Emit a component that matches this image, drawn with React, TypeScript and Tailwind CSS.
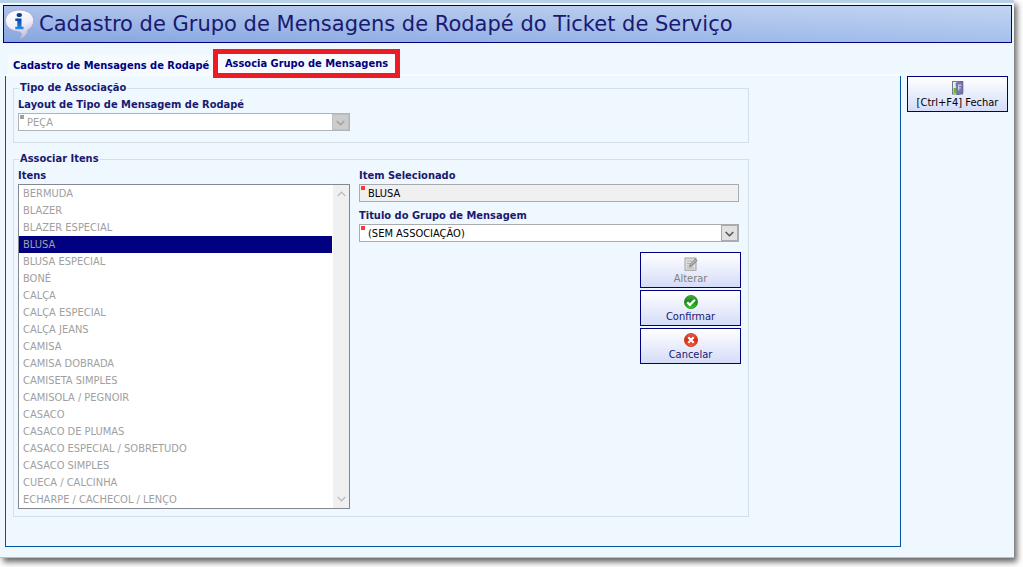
import type { ReactNode } from "react";

const items = [
  "BERMUDA",
  "BLAZER",
  "BLAZER ESPECIAL",
  "BLUSA",
  "BLUSA ESPECIAL",
  "BONÉ",
  "CALÇA",
  "CALÇA ESPECIAL",
  "CALÇA JEANS",
  "CAMISA",
  "CAMISA DOBRADA",
  "CAMISETA SIMPLES",
  "CAMISOLA / PEGNOIR",
  "CASACO",
  "CASACO DE PLUMAS",
  "CASACO ESPECIAL / SOBRETUDO",
  "CASACO SIMPLES",
  "CUECA / CALCINHA",
  "ECHARPE / CACHECOL / LENÇO",
];

function InfoIcon() {
  return (
    <svg width="32" height="34" viewBox="0 0 32 34" aria-hidden="true">
      <defs>
        <linearGradient id="bubble" x1="0" y1="0" x2="0.4" y2="1">
          <stop offset="0" stopColor="#ffffff" />
          <stop offset="0.6" stopColor="#f1f0fb" />
          <stop offset="1" stopColor="#c3c2e2" />
        </linearGradient>
        <linearGradient id="info" x1="0" y1="0" x2="0" y2="1">
          <stop offset="0" stopColor="#0a3f9c" />
          <stop offset="1" stopColor="#1e90f0" />
        </linearGradient>
      </defs>
      <path
        d="M15.500 3C7.600 3 1.500 7.300 1.500 13.500c0 6 5 10 12.300 10.900 2.500.3 3.700 1.200 3.600 3.200-.1 1.800-1 3.200-2.300 4.400 5.200-1.200 8.200-4.300 8.700-9 3.600-2 5.900-5.300 5.900-9.300C29.700 7.300 23.500 3 15.500 3z"
        fill="url(#bubble)"
        stroke="#a9a8cc"
        strokeWidth="0.9"
      />
      <ellipse cx="15.300" cy="8" rx="2.700" ry="2.100" fill="#0b3d97" />
      <path d="M11.300 11.500h6.200v8.300h2V22.200h-8.200v-2.400h2v-5.900h-2z" fill="url(#info)" />
    </svg>
  );
}

function DoorIcon() {
  return (
    <svg width="12" height="14" viewBox="0 0 12 14" aria-hidden="true">
      <rect x="0.500" y="0.500" width="10" height="12.500" fill="#e9e9f2" stroke="#77778c" />
      <rect x="1.500" y="7" width="3" height="5" fill="#5fc51e" />
      <path d="M4 2l7-1.500v11.500L5 14z" fill="#7776ad" stroke="#56558a" strokeWidth="0.600" />
      <path d="M6 3.500h3.500v1.200H7.200v1.600h1.600v1.200H7.200v2H6z" fill="#c7c8e6" />
    </svg>
  );
}

function EditIcon() {
  return (
    <svg width="14" height="14" viewBox="0 0 14 14" aria-hidden="true">
      <rect x="1" y="1" width="11" height="12.300" fill="#dedede" stroke="#a2a2a2" />
      <path d="M3 4h5M3 6.500h4M3 9h2M3 11h7" stroke="#b2b2b2" />
      <path d="M5.500 9.800l.7-2.600 5-5.400 1.900 1.800-5.100 5.400z" fill="#999" stroke="#777" strokeWidth="0.600" />
      <path d="M7 7.800l4.500-4.800" stroke="#d8d8d8" strokeWidth="0.800" />
    </svg>
  );
}

function ConfirmIcon() {
  return (
    <svg width="14" height="14" viewBox="0 0 14 14" aria-hidden="true">
      <defs>
        <linearGradient id="green" x1="0" y1="0" x2="0" y2="1">
          <stop offset="0" stopColor="#4ba64b" />
          <stop offset="0.450" stopColor="#168a16" />
          <stop offset="1" stopColor="#35cf1f" />
        </linearGradient>
      </defs>
      <circle cx="7" cy="7" r="6.600" fill="url(#green)" stroke="#1f7f22" strokeWidth="0.700" />
      <path d="M3.200 7.200l2.700 2.700 5-5.200" fill="none" stroke="#fff" strokeWidth="2.300" />
    </svg>
  );
}

function CancelIcon() {
  return (
    <svg width="14" height="14" viewBox="0 0 14 14" aria-hidden="true">
      <defs>
        <linearGradient id="red" x1="0" y1="0" x2="0" y2="1">
          <stop offset="0" stopColor="#e8604e" />
          <stop offset="0.450" stopColor="#d42a12" />
          <stop offset="1" stopColor="#ff5a2c" />
        </linearGradient>
      </defs>
      <circle cx="7" cy="7" r="6.600" fill="url(#red)" stroke="#b92c1c" strokeWidth="0.700" />
      <path d="M4.300 4.300l5.400 5.400M9.700 4.300l-5.400 5.400" stroke="#fff" strokeWidth="2.300" />
    </svg>
  );
}

function Chevron({ up = false }: { up?: boolean }) {
  return (
    <svg width="9" height="6" viewBox="0 0 9 6" aria-hidden="true">
      <path d={up ? "M.7 5l3.800-3.800L8.300 5" : "M.7 1l3.800 3.800L8.300 1"} fill="none" stroke="currentColor" strokeWidth="1.400" />
    </svg>
  );
}

function ActionButton({ icon, color, disabled, children }: { icon: ReactNode; color: string; disabled?: boolean; children: ReactNode }) {
  return (
    <button
      type="button"
      disabled={disabled}
      className={`flex h-9 w-[101px] flex-col items-center justify-end whitespace-nowrap border border-[#000080] bg-linear-to-b from-white to-[#d5dcf8] ${color}`}
    >
      {icon}
      <span className="leading-4">{children}</span>
    </button>
  );
}

function Group({ title, children }: { title: string; children: ReactNode }) {
  return (
    <fieldset className="w-full max-w-[736px] border border-[#d5dfe8] px-1">
      <legend className="ml-px px-px font-bold leading-[14px] text-[#191970]">{title}</legend>
      {children}
    </fieldset>
  );
}

const labelClass = "block pt-0.5 font-bold leading-[14px] text-[#191970]";

function Combo({ id, value, disabled }: { id: string; value: string; disabled?: boolean }) {
  return (
    <div className={`relative flex h-[18px] border bg-white ${disabled ? "border-[#b0b4b8]" : "border-[#a9abb0]"}`}>
      <select
        id={id}
        disabled={disabled}
        className={`w-full appearance-none bg-transparent pl-2 pt-px leading-[15px] opacity-100 ${disabled ? "text-[#a0a0a0]" : "text-black"}`}
      >
        <option>{value}</option>
      </select>
      <span className={`absolute left-px top-px size-1 ${disabled ? "bg-[#a0a0a0]" : "bg-[#ff3838]"}`} />
      <span
        className={`pointer-events-none absolute inset-y-0 right-0 flex w-[17px] items-center justify-center border pt-0.5 ${
          disabled ? "border-[#bfbfbf] bg-[#cccccc] text-[#a0a0a0]" : "border-[#a9abb0] bg-[#e1e1e1] text-[#505050]"
        }`}
      >
        <Chevron />
      </span>
    </div>
  );
}

export default function App() {
  return (
    <div className="bg-white pb-[9px] pr-[9px] font-['DejaVu_Sans_Condensed','DejaVu_Sans',sans-serif] text-[11px]">
      <main className="border-b border-t-3 border-b-[#a9c4dc] border-t-[#b8cfe8] bg-[#eff7ff] pt-0.5 shadow-[3px_4px_6px_0px_#666666]">
        <header className="ml-[3px] mr-0.5 flex h-[38px] items-center gap-[3px] border border-[#000080] bg-[linear-gradient(to_bottom,rgba(255,255,255,0.32),rgba(255,255,255,0)),linear-gradient(to_right,#86a5e0,#a5c0ec)]">
          <InfoIcon />
          <h1 className="whitespace-nowrap font-['DejaVu_Sans',sans-serif] text-[21px] leading-8 text-[#191970]">
            Cadastro de Grupo de Mensagens de Rodapé do Ticket de Serviço
          </h1>
        </header>

        <div role="tablist" className="ml-2 mt-[11px] flex h-5 gap-[5px] whitespace-nowrap font-bold text-[#000080]">
          <button type="button" role="tab" aria-selected="false" className="w-[205px] rounded-t-sm bg-[#f5faff] pl-[5px] pt-0.5 text-left leading-5">
            Cadastro de Mensagens de Rodapé
          </button>
          <button
            type="button"
            role="tab"
            aria-selected="true"
            className="relative z-10 h-[19px] w-[177px] bg-[#f7fbff] text-center leading-[18px] outline-5 outline-[#ed1c24]"
          >
            Associa Grupo de Mensagens
          </button>
        </div>

        <div className="ml-[5px] mr-1.5 flex items-start gap-1.5">
          <div className="min-w-0 flex-1 border-t-2 border-[#f8fcff]">
            <section className="flex flex-col gap-[9px] border-x border-b border-[#0054a0] pb-[29px] pl-[7px] pr-2 pt-[5px]">
              <Group title="Tipo de Associação">
                <div className="flex w-[332px] flex-col gap-px pb-[11px] pt-px">
                  <label htmlFor="layout" className={labelClass}>
                    Layout de Tipo de Mensagem de Rodapé
                  </label>
                  <Combo id="layout" value="PEÇA" disabled />
                </div>
              </Group>

              <Group title="Associar Itens">
                <div className="flex gap-[9px] pb-[7px] pr-[3px] pt-px">
                  <div className="flex w-[332px] flex-col gap-px">
                    <label htmlFor="items" className={labelClass}>
                      Itens
                    </label>
                    <div className="flex border border-[#828790] bg-white">
                      <select
                        id="items"
                        size={19}
                        disabled
                        defaultValue="BLUSA"
                        className="h-[323px] min-w-0 flex-1 appearance-none overflow-hidden bg-white opacity-100"
                      >
                        {items.map((item) => (
                          <option
                            key={item}
                            value={item}
                            className="h-[17px] min-h-0 px-1 pb-0 pt-0.5 leading-[15px] text-[#a0a0a0] checked:bg-[linear-gradient(#000080,#000080)]"
                          >
                            {item}
                          </option>
                        ))}
                      </select>
                      <div className="ml-px flex w-4 flex-col items-center justify-between bg-[#f0f0f0] py-1.5 text-[#bfbfbf]">
                        <Chevron up />
                        <Chevron />
                      </div>
                    </div>
                  </div>

                  <div className="flex min-w-0 flex-1 flex-col">
                    <div className="mr-0.5 flex flex-col gap-px">
                      <label htmlFor="selected" className={labelClass}>
                        Item Selecionado
                      </label>
                      <div className="relative flex h-[18px] border border-[#a9abb0] bg-[#f0f0f0]">
                        <input id="selected" readOnly value="BLUSA" className="w-full bg-transparent pl-2 pt-px leading-[15px] text-black" />
                        <span className="absolute left-px top-px size-1 bg-[#ff3838]" />
                      </div>
                    </div>
                    <div className="mr-0.5 mt-[5px] flex flex-col gap-px">
                      <label htmlFor="group" className={labelClass}>
                        Titulo do Grupo de Mensagem
                      </label>
                      <Combo id="group" value="(SEM ASSOCIAÇÃO)" />
                    </div>
                    <div className="mt-2.5 flex flex-col items-end gap-0.5">
                      <ActionButton icon={<EditIcon />} color="text-[#808080]" disabled>
                        Alterar
                      </ActionButton>
                      <ActionButton icon={<ConfirmIcon />} color="text-[#191970]">
                        Confirmar
                      </ActionButton>
                      <ActionButton icon={<CancelIcon />} color="text-[#191970]">
                        Cancelar
                      </ActionButton>
                    </div>
                  </div>
                </div>
              </Group>
            </section>
          </div>

          <aside className="pt-0.5">
            <ActionButton icon={<DoorIcon />} color="text-black">
              [Ctrl+F4] Fechar
            </ActionButton>
          </aside>
        </div>
        <div className="h-2.5" />
      </main>
    </div>
  );
}
